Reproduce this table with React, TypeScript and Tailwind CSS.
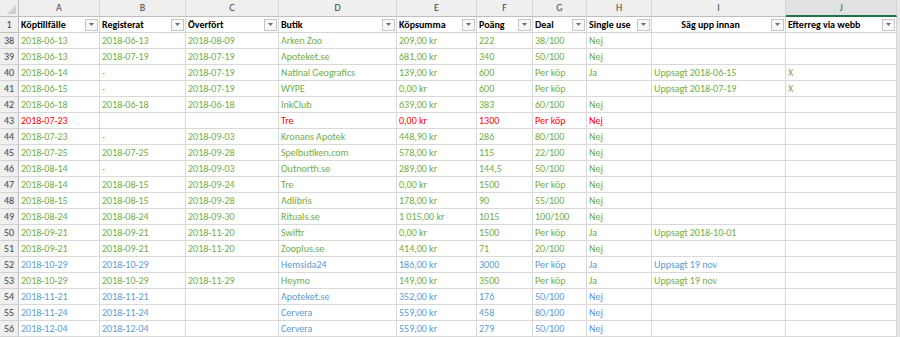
import React from 'react';

type Tone = 'g' | 'r' | 'b';

interface Row {
    n: number;
    tone: Tone;
    cells: string[];
}

const rows: Row[] = [
    { n: 38, tone: 'g', cells: ['2018-06-13', '2018-06-13', '2018-08-09', 'Arken Zoo', '209,00 kr', '222', '38/100', 'Nej', '', ''] },
    { n: 39, tone: 'g', cells: ['2018-06-13', '2018-07-19', '2018-07-19', 'Apoteket.se', '681,00 kr', '340', '50/100', 'Nej', '', ''] },
    { n: 40, tone: 'g', cells: ['2018-06-14', '-', '2018-07-19', 'Natinal Geografics', '139,00 kr', '600', 'Per köp', 'Ja', 'Uppsagt 2018-06-15', 'X'] },
    { n: 41, tone: 'g', cells: ['2018-06-15', '-', '2018-07-19', 'WYPE', '0,00 kr', '600', 'Per köp', '', 'Uppsagt 2018-07-19', 'X'] },
    { n: 42, tone: 'g', cells: ['2018-06-18', '2018-06-18', '2018-06-18', 'InkClub', '639,00 kr', '383', '60/100', 'Nej', '', ''] },
    { n: 43, tone: 'r', cells: ['2018-07-23', '', '', 'Tre', '0,00 kr', '1300', 'Per köp', 'Nej', '', ''] },
    { n: 44, tone: 'g', cells: ['2018-07-23', '-', '2018-09-03', 'Kronans Apotek', '448,90 kr', '286', '80/100', 'Nej', '', ''] },
    { n: 45, tone: 'g', cells: ['2018-07-25', '2018-07-25', '2018-09-28', 'Spelbutiken.com', '578,00 kr', '115', '22/100', 'Nej', '', ''] },
    { n: 46, tone: 'g', cells: ['2018-08-14', '-', '2018-09-03', 'Outnorth.se', '289,00 kr', '144,5', '50/100', 'Nej', '', ''] },
    { n: 47, tone: 'g', cells: ['2018-08-14', '2018-08-15', '2018-09-24', 'Tre', '0,00 kr', '1500', 'Per köp', 'Nej', '', ''] },
    { n: 48, tone: 'g', cells: ['2018-08-15', '2018-08-15', '2018-09-28', 'Adlibris', '178,00 kr', '90', '55/100', 'Nej', '', ''] },
    { n: 49, tone: 'g', cells: ['2018-08-24', '2018-08-24', '2018-09-30', 'Rituals.se', '1 015,00 kr', '1015', '100/100', 'Nej', '', ''] },
    { n: 50, tone: 'g', cells: ['2018-09-21', '2018-09-21', '2018-11-20', 'Swiftr', '0,00 kr', '1500', 'Per köp', 'Ja', 'Uppsagt 2018-10-01', ''] },
    { n: 51, tone: 'g', cells: ['2018-09-21', '2018-09-21', '2018-11-20', 'Zooplus.se', '414,00 kr', '71', '20/100', 'Nej', '', ''] },
    { n: 52, tone: 'b', cells: ['2018-10-29', '2018-10-29', '', 'Hemsida24', '186,00 kr', '3000', 'Per köp', 'Ja', 'Uppsagt 19 nov', ''] },
    { n: 53, tone: 'g', cells: ['2018-10-29', '2018-10-29', '2018-11-29', 'Heymo', '149,00 kr', '3500', 'Per köp', 'Ja', 'Uppsagt 19 nov', ''] },
    { n: 54, tone: 'b', cells: ['2018-11-21', '2018-11-21', '', 'Apoteket.se', '352,00 kr', '176', '50/100', 'Nej', '', ''] },
    { n: 55, tone: 'b', cells: ['2018-11-24', '2018-11-24', '', 'Cervera', '559,00 kr', '458', '80/100', 'Nej', '', ''] },
    { n: 56, tone: 'b', cells: ['2018-12-04', '2018-12-04', '', 'Cervera', '559,00 kr', '279', '50/100', 'Nej', '', ''] },
];

const headers = ['Köptillfälle', 'Registerat', 'Överfört', 'Butik', 'Köpsumma', 'Poäng', 'Deal', 'Single use', 'Säg upp innan', 'Efterreg via webb'];
const letters = ['A', 'B', 'C', 'D', 'E', 'F', 'G', 'H', 'I', 'J'];

const toneClass: Record<Tone, string> = {
    g: 'text-[#70ad47]',
    r: 'text-[#ff0000]',
    b: 'text-[#5b9bd5]',
};

const FilterButton = () => (
    <span className="flex h-[12px] w-[13px] shrink-0 items-center justify-center border border-[#c6c6c6] bg-[#f7f7f7]">
        <svg width="5" height="3" viewBox="0 0 5 3">
            <path d="M0 0h5L2.5 3z" fill="#6f6f6f" />
        </svg>
    </span>
);

const App: React.FC = () => {
    return (
        <div
            className="h-[337px] w-[900px] overflow-hidden bg-[#e6e6e6] text-[10px] leading-[14px]"
            style={{ fontFamily: 'Calibri, Carlito, "Liberation Sans", sans-serif' }}
        >
            <div className="grid grid-cols-[19px_81px_86px_93px_118px_80px_56px_54px_65px_134px_111px] auto-rows-[16px] grid-rows-[17px]">
                {/* corner */}
                <div className="relative border-r border-b border-[#bfbfbf] bg-[#efefef]">
                    <svg className="absolute right-[2px] bottom-[2px]" width="9" height="9" viewBox="0 0 9 9">
                        <path d="M9 0v9H0z" fill="#cfcfcf" />
                    </svg>
                </div>
                {letters.map((l, i) => (
                    <div
                        key={l}
                        className={
                            i === 9
                                ? 'flex items-center justify-center border-r border-b-2 border-r-[#d4d4d4] border-b-[#217346] bg-[#e1e1e1] text-[#217346]'
                                : 'flex items-center justify-center border-r border-b border-r-[#d4d4d4] border-b-[#bfbfbf] bg-[#efefef] text-[#444]'
                        }
                    >
                        {l}
                    </div>
                ))}

                {/* row 1: table headers */}
                <div className="flex items-center justify-center border-r border-b border-[#bfbfbf] bg-[#efefef] text-[#444]">1</div>
                {headers.map((h, i) => (
                    <div key={h} className="flex items-center gap-1 border-r border-b border-[#d4d4d4] bg-white pl-[2px] pr-[1px]">
                        <span className={`flex-1 whitespace-nowrap font-bold text-black ${i === 8 ? 'text-center' : ''}`}>{h}</span>
                        <FilterButton />
                    </div>
                ))}

                {rows.map(r => (
                    <React.Fragment key={r.n}>
                        <div className="flex items-center justify-center border-r border-b border-r-[#bfbfbf] border-b-[#d4d4d4] bg-[#efefef] text-[#444]">
                            {r.n}
                        </div>
                        {r.cells.map((c, i) => (
                            <div
                                key={i}
                                className={`flex items-center whitespace-nowrap border-r border-b border-[#d9d9d9] bg-white pl-[2px] ${toneClass[r.tone]}`}
                            >
                                {c}
                            </div>
                        ))}
                    </React.Fragment>
                ))}
            </div>
        </div>
    );
};

export default App;
